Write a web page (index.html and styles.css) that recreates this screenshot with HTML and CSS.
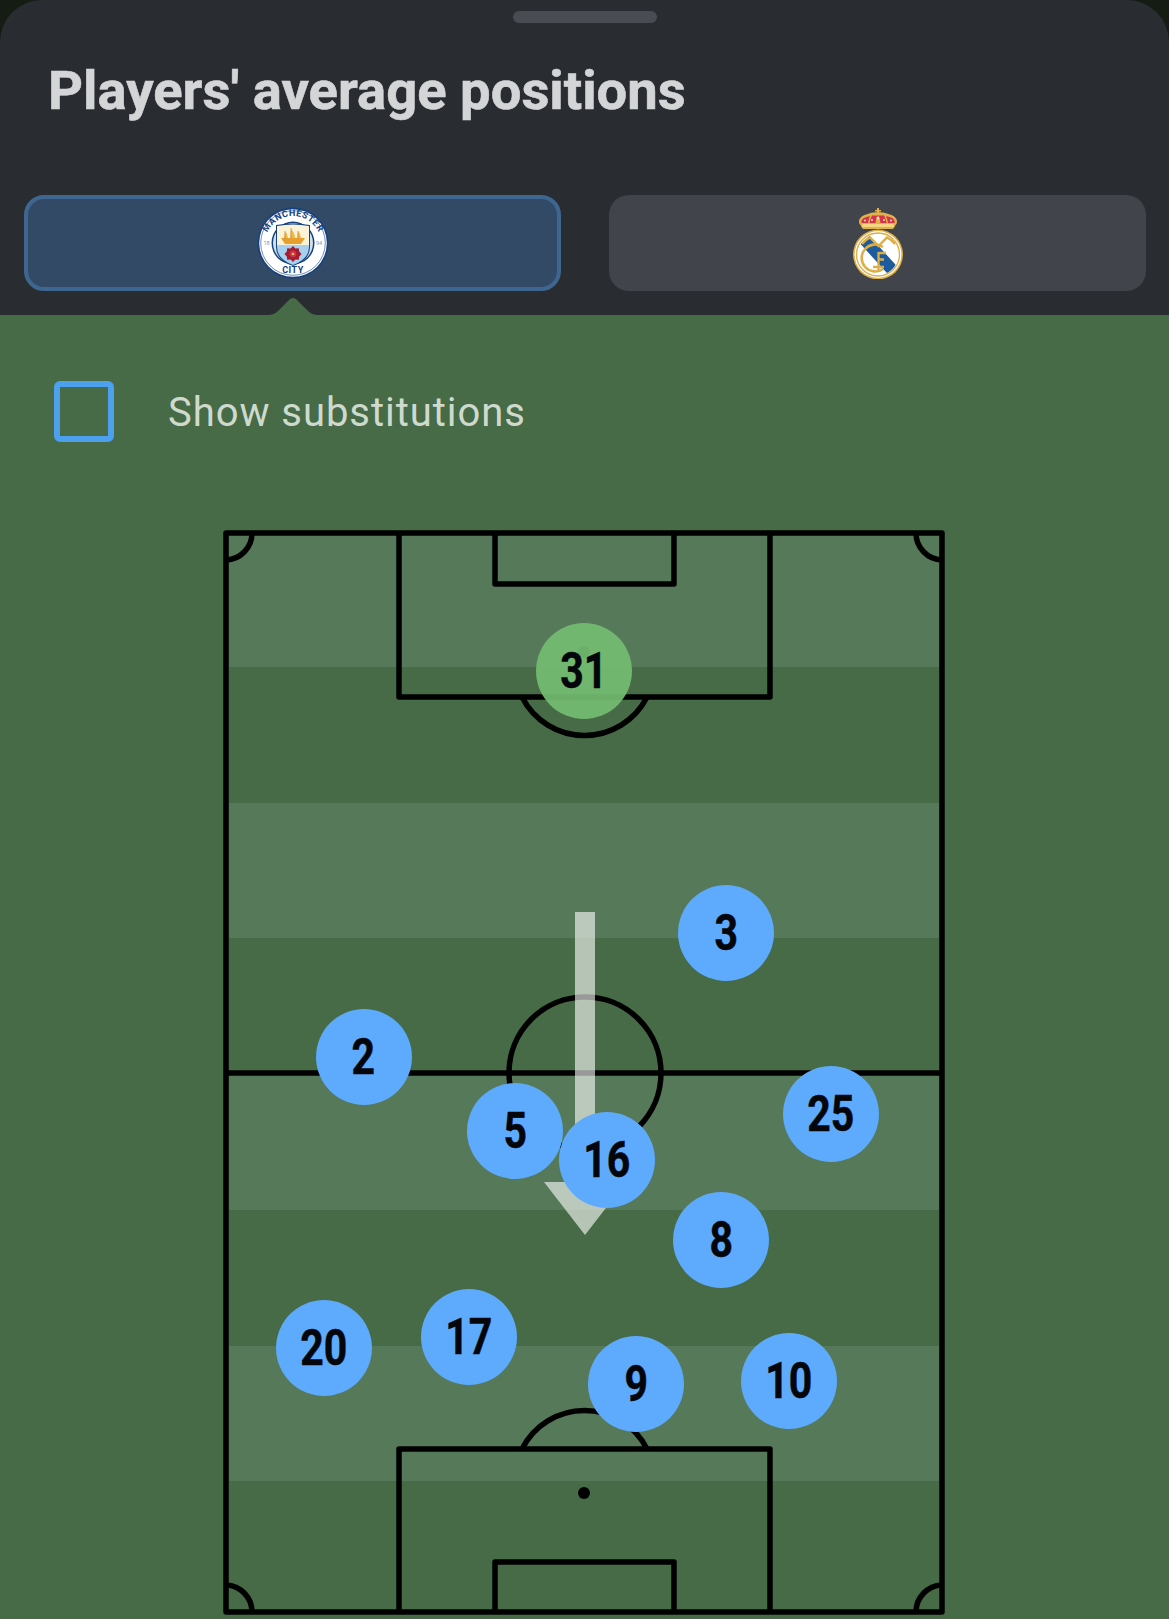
FILE: index.html
```html
<!DOCTYPE html>
<html lang="en">
<head>
<meta charset="utf-8">
<title>Players' average positions</title>
<link rel="stylesheet" href="styles.css">
</head>
<body>
<div class="sheet">
  <header class="head">
    <div class="handle"></div>
    <h1 class="title">Players' average positions</h1>
    <div class="tabs">
      <button class="tab tab-active">
        <svg class="crest" viewBox="0 0 72 72" width="72" height="72">
          <defs>
            <path id="arcTop" d="M8 37a28 28 0 0 1 56 0"/>
            <clipPath id="shield"><path d="M20 19q16-3 32 0v21q0 12-16 18q-16-6-16-18z"/></clipPath>
          </defs>
          <circle cx="36" cy="36" r="35.500" fill="#15417f"/>
          <circle cx="36" cy="36" r="33.800" fill="#fff"/>
          <circle cx="36" cy="36" r="32.300" fill="none" stroke="#15417f" stroke-width=".6"/>
          <circle cx="36" cy="36" r="21.500" fill="#15417f"/>
          <circle cx="36" cy="36" r="20" fill="#cfe0ee"/>
          <text class="crest-word"><textPath href="#arcTop" startOffset="50%" text-anchor="middle">MANCHESTER</textPath></text>
          <text class="crest-city" x="36" y="66" text-anchor="middle">CITY</text>
          <text class="crest-year" x="6.500" y="38">18</text>
          <text class="crest-year" x="59" y="38">94</text>
          <path d="M19 18q17-3 34 0v22q0 13-17 19q-17-6-17-19z" fill="#15417f"/>
          <g clip-path="url(#shield)">
            <rect x="18" y="15" width="36" height="23" fill="#fbf3d8"/>
            <rect x="18" y="38" width="36" height="22" fill="#a6d0ee"/>
            <path d="M24 31h24l-4 6h-16z" fill="#e5a02f"/>
            <path d="M27 31q1-5 1-7q3 3 3 7zM33 31q1-7 1-9q4 4 4 9zM40 31q1-5 1-7q3 3 3 7z" fill="#f0b84a"/>
            <path d="M28 24v8M34 21v10M41 24v8" stroke="#c98a22" stroke-width=".7"/>
          </g>
          <path d="M36 39l2.400 2.600 3.400-.4.400 3.400 2.400 2.400-2.400 2.400-.4 3.400-3.400-.4L36 55l-2.400-2.600-3.400.4-.4-3.400-2.400-2.400 2.400-2.400.4-3.400 3.400.4z" fill="#a51c30"/>
          <circle cx="36" cy="47" r="3.400" fill="#c8324a"/>
          <circle cx="36" cy="47" r="1.300" fill="#eec04f"/>
        </svg>
      </button>
      <button class="tab">
        <svg class="crest" viewBox="0 0 52 72" width="52" height="72">
          <clipPath id="disc"><circle cx="26" cy="47.500" r="20.500"/></clipPath>
          <path d="M25 1h2v2h2v1.600h-2v3h-2v-3h-2v-1.600h2z" fill="#e0b24c"/>
          <path d="M11 22q-2-2-2.500-4q-1.500-1-1.500-3.500q0-4 5.500-6.500q7-3 13.500-3q6.500 0 13.500 3q5.500 2.500 5.500 6.500q0 2.500-1.500 3.500q-.5 2-2.500 4z" fill="#e0b24c"/>
          <path d="M9.500 16q-1-3.500 3.500-5.500q2.500-1 5-1.500q-1.500 3-2 7zM42.500 16q1-3.500-3.500-5.500q-2.500-1-5-1.500q1.500 3 2 7zM17.500 16q.5-4 2.500-7.500h12q2 3.500 2.500 7.500z" fill="#d5324d"/>
          <path d="M23.500 16q0-4 2.500-7q2.500 3 2.500 7z" fill="#e0b24c"/>
          <circle cx="26" cy="11" r="1.500" fill="#f6e3a8"/>
          <circle cx="13" cy="13.500" r="1" fill="#f6e3a8"/>
          <circle cx="39" cy="13.500" r="1" fill="#f6e3a8"/>
          <circle cx="20" cy="13" r="1" fill="#f6e3a8"/>
          <circle cx="32" cy="13" r="1" fill="#f6e3a8"/>
          <rect x="10" y="17" width="32" height="3" rx="1.500" fill="#f4d67e"/>
          <circle cx="26" cy="47.500" r="25" fill="#dcae47"/>
          <circle cx="26" cy="47.500" r="23.400" fill="#fff"/>
          <circle cx="26" cy="47.500" r="21.500" fill="none" stroke="#dcae47" stroke-width="1.300"/>
          <path d="M13 33L43 66" stroke="#1d5a9e" stroke-width="12" clip-path="url(#disc)"/>
          <path d="M10 37Q13 33 18 30.500L26.500 39L35 30.500Q40 33 43 37" fill="none" stroke="#dcae47" stroke-width="2.400"/>
          <path d="M31 40a13.500 13.500 0 1 0 0 22" fill="none" stroke="#dcae47" stroke-width="2.600"/>
          <path d="M26.500 45V64M26.500 46H34M26.500 52.500H32M21 60H32" fill="none" stroke="#dcae47" stroke-width="2.300"/>
        </svg>
      </button>
    </div>
    <svg class="notch" viewBox="0 0 50 17" width="50" height="17"><path d="M0 17q6 0 10-4l12-12q3-2 6 0l12 12q4 4 10 4z"/></svg>
  </header>
  <main class="field">
    <label class="toggle">
      <span class="checkbox"></span>
      <span class="toggle-label">Show substitutions</span>
    </label>
    <div class="pitch">
      <svg class="pitch-lines" viewBox="222 530 724 1089" width="724" height="1089">
        <g class="stripes">
          <rect x="229" y="533" width="710" height="134"/>
          <rect x="229" y="803" width="710" height="135"/>
          <rect x="229" y="1074" width="710" height="136"/>
          <rect x="229" y="1346" width="710" height="135"/>
        </g>
        <g class="marks">
          <rect x="226" y="533" width="716" height="1079"/>
          <path d="M226 1073H942"/>
          <circle cx="585" cy="1073" r="76"/>
          <path d="M399 533V697H770V533M495 533V584H674V533"/>
          <path d="M399 1612V1449H770V1612M495 1612V1562H674V1612"/>
          <path d="M522 697A70 70 0 0 0 647 697"/>
          <path d="M522 1449A70 70 0 0 1 647 1449"/>
          <path d="M226 560A27 27 0 0 0 252 533M942 560A27 27 0 0 1 916 533"/>
          <path d="M226 1585A27 27 0 0 1 252 1612M942 1585A27 27 0 0 0 916 1612"/>
        </g>
        <circle class="spot" cx="584" cy="652" r="6"/>
        <circle class="spot" cx="584" cy="1493" r="6"/>
        <path class="arrow" d="M575 912H595V1182H626L585 1235L544 1182H575Z"/>
      </svg>
      <div class="player player-keeper" style="left:313.500px;top:93px"><span>31</span></div>
      <div class="player" style="left:456px;top:354.500px"><span>3</span></div>
      <div class="player" style="left:93.500px;top:478.500px"><span>2</span></div>
      <div class="player" style="left:245px;top:553px"><span>5</span></div>
      <div class="player" style="left:561px;top:536px"><span>25</span></div>
      <div class="player" style="left:336.700px;top:582px"><span>16</span></div>
      <div class="player" style="left:451px;top:662px"><span>8</span></div>
      <div class="player" style="left:54px;top:770px"><span>20</span></div>
      <div class="player" style="left:199px;top:759px"><span>17</span></div>
      <div class="player" style="left:366px;top:806px"><span>9</span></div>
      <div class="player" style="left:519px;top:803px"><span>10</span></div>
    </div>
  </main>
</div>
</body>
</html>
```
FILE: styles.css
```css
* { box-sizing: border-box; }
html, body { margin: 0; padding: 0; }
body {
  width: 1169px;
  height: 1619px;
  overflow: hidden;
  background: #141c14;
  font-family: Roboto, "Liberation Sans", sans-serif;
}
.sheet {
  height: 1619px;
  border-radius: 42px 42px 0 0;
  overflow: hidden;
  display: flex;
  flex-direction: column;
}
.head {
  position: relative;
  height: 315px;
  background: #292c31;
  padding: 11px 23px 0 24px;
}
.handle {
  width: 144px;
  height: 12px;
  margin: 0 auto;
  border-radius: 6px;
  background: #494c52;
}
.title {
  margin: 29px 0 0 24px;
  height: 77px;
  font-size: 54.400px;
  font-weight: 700;
  line-height: 77px;
  color: #d4d5d7;
  white-space: nowrap;
  -webkit-text-stroke: 0.6px #d4d5d7;
}
.tabs {
  display: grid;
  grid-template-columns: 537px 537px;
  column-gap: 48px;
  margin-top: 66px;
}
.tab {
  height: 96px;
  border: 0;
  padding: 0;
  border-radius: 20px;
  background: #41444a;
  display: flex;
  align-items: center;
  justify-content: center;
}
.tab-active {
  background: #324a66;
  border: 4px solid #3d6690;
}
.crest { display: block; }
.crest-word {
  font-family: Roboto, sans-serif;
  font-size: 9px;
  font-weight: 700;
  fill: #15417f;
  letter-spacing: 0.500px;
}
.crest-city {
  font-family: Roboto, sans-serif;
  font-size: 9px;
  font-weight: 700;
  fill: #15417f;
  letter-spacing: 0.500px;
}
.crest-year {
  font-family: Roboto, sans-serif;
  font-size: 5.500px;
  fill: #6f9bc6;
}
.notch {
  position: absolute;
  left: 268px;
  bottom: 0;
  fill: #466b46;
  display: block;
}
.field {
  flex: 1;
  background: #466b46;
  padding: 66px 0 0 54px;
}
.toggle {
  display: flex;
  align-items: center;
  gap: 54px;
  height: 61px;
}
.checkbox {
  width: 60px;
  height: 61px;
  border: 6px solid #4da0ee;
  border-radius: 6px;
}
.toggle-label {
  font-size: 40px;
  letter-spacing: 0.950px;
  color: #cfdacf;
  margin-top: 2px;
}
.pitch {
  position: relative;
  width: 724px;
  height: 1089px;
  margin: 88px 0 0 168px;
}
.pitch-lines { display: block; }
.stripes rect { fill: #567959; }
.marks { fill: none; stroke: #000; stroke-width: 5.500; stroke-linejoin: round; }
.spot { fill: #000; }
.arrow { fill: #fff; fill-opacity: 0.6; }
.player {
  position: absolute;
  width: 96px;
  height: 96px;
  border-radius: 50%;
  background: #5eaafc;
  color: #05060c;
  font-size: 50px;
  font-weight: 700;
  display: flex;
  align-items: center;
  justify-content: center;
}
.player span {
  display: block;
  transform: scaleX(0.82);
  line-height: 1;
  -webkit-text-stroke: 0.5px #05060c;
}
.player-keeper { background: rgba(116, 188, 113, 0.93); }
```
